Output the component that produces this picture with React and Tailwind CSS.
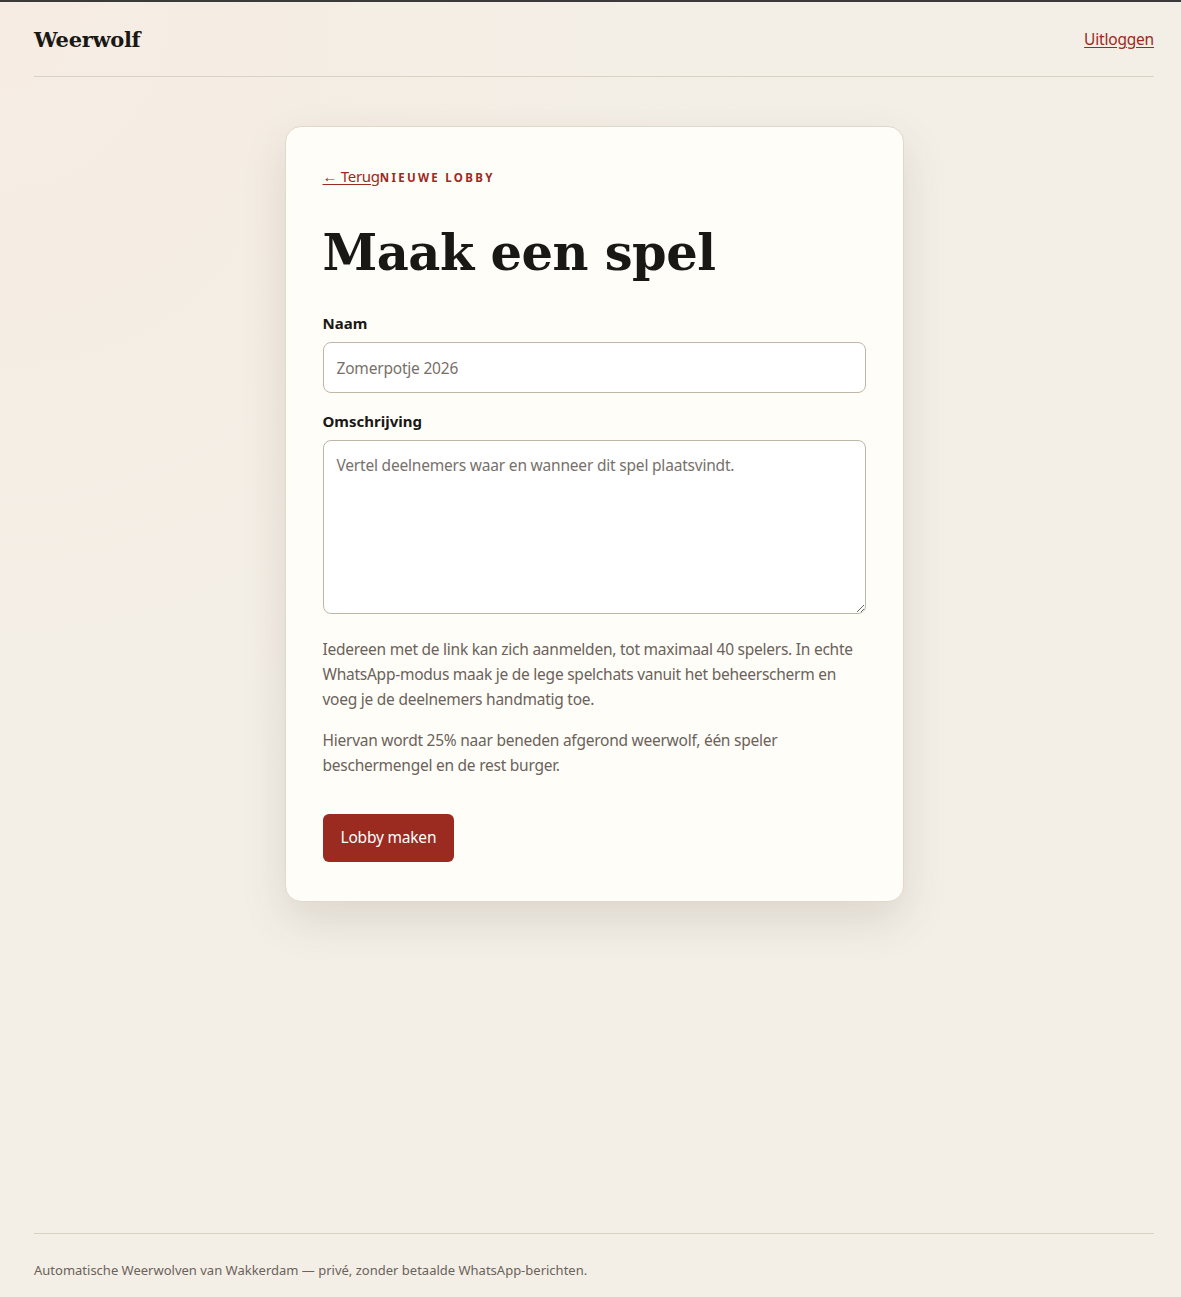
import React from "react";

const App = () => {
  return (
    <div
      className="min-h-screen flex flex-col border-t-2 border-[#3b3a38] bg-[#f3efe7] bg-[radial-gradient(ellipse_at_top_left,#f6ece3_0%,#f3efe7_45%)] font-['Noto_Sans',sans-serif] text-[#1a1814]"
    >
      <div className="pl-[34px] pr-[27px]">
        <header className="h-[75px] pt-[2px] flex items-center justify-between border-b border-[#d9d3c6]">
          <span className="font-['DejaVu_Serif',serif] text-[21px] font-bold tracking-[-0.3px] text-[#1a1814]">
            Weerwolf
          </span>
          <a href="#" className="text-[15.5px] tracking-[-0.2px] text-[#9b2a20] underline underline-offset-2">
            Uitloggen
          </a>
        </header>
      </div>

      <main className="flex-1 flex justify-center pt-[49px] pl-[7px]">
        <div className="w-[619px] self-start bg-[#fffdf8] border border-[#e0d9cb] rounded-[16px] shadow-[0_18px_45px_rgba(70,50,30,0.13)] px-[37px] pt-[37px] pb-[39px]">
          <div className="flex items-baseline">
            <a href="#" className="text-[15px] leading-[24px] tracking-[-0.3px] text-[#9b2a20] underline underline-offset-2">
              ← Terug
            </a>
            <span className="text-[11.5px] font-bold tracking-[2.3px] text-[#9b2a20] uppercase">
              Nieuwe lobby
            </span>
          </div>

          <h1 className="mt-[32px] font-['DejaVu_Serif',serif] text-[49.5px] leading-[66px] font-bold tracking-[-0.5px] text-[#1a1814]">
            Maak een spel
          </h1>

          <label className="block mt-[26px] text-[15px] leading-[22px] font-bold">Naam</label>
          <input
            type="text"
            placeholder="Zomerpotje 2026"
            className="mt-[8px] w-full h-[51px] rounded-[8px] border border-[#bfb6a6] bg-white px-[13px] text-[15.5px] tracking-[-0.2px] placeholder:text-[#77716a] outline-none"
          />

          <label className="block mt-[17px] text-[15px] leading-[22px] font-bold">Omschrijving</label>
          <textarea
            placeholder="Vertel deelnemers waar en wanneer dit spel plaatsvindt."
            className="mt-[8px] block w-full h-[174px] rounded-[8px] border border-[#bfb6a6] bg-white px-[13px] py-[12px] text-[15.5px] tracking-[-0.2px] leading-[24px] placeholder:text-[#77716a] outline-none"
          />

          <p className="mt-[23px] text-[15.5px] tracking-[-0.25px] leading-[25px] text-[#6b625a]">
            Iedereen met de link kan zich aanmelden, tot maximaal 40 spelers. In echte
            WhatsApp-modus maak je de lege spelchats vanuit het beheerscherm en voeg je de
            deelnemers handmatig toe.
          </p>
          <p className="mt-[16px] text-[15.5px] tracking-[-0.25px] leading-[25px] text-[#6b625a]">
            Hiervan wordt 25% naar beneden afgerond weerwolf, één speler beschermengel en de rest
            burger.
          </p>

          <button className="mt-[36px] h-[48px] px-[18px] rounded-[6px] bg-[#9b2a20] text-white text-[15.5px] tracking-[-0.2px]">
            Lobby maken
          </button>
        </div>
      </main>

      <div className="pl-[34px] pr-[27px]">
        <footer className="border-t border-[#d9d3c6] pt-[26px] pb-[17px] text-[13px] leading-[20px] text-[#6b625a]">
          Automatische Weerwolven van Wakkerdam — privé, zonder betaalde WhatsApp-berichten.
        </footer>
      </div>
    </div>
  );
};

export default App;
